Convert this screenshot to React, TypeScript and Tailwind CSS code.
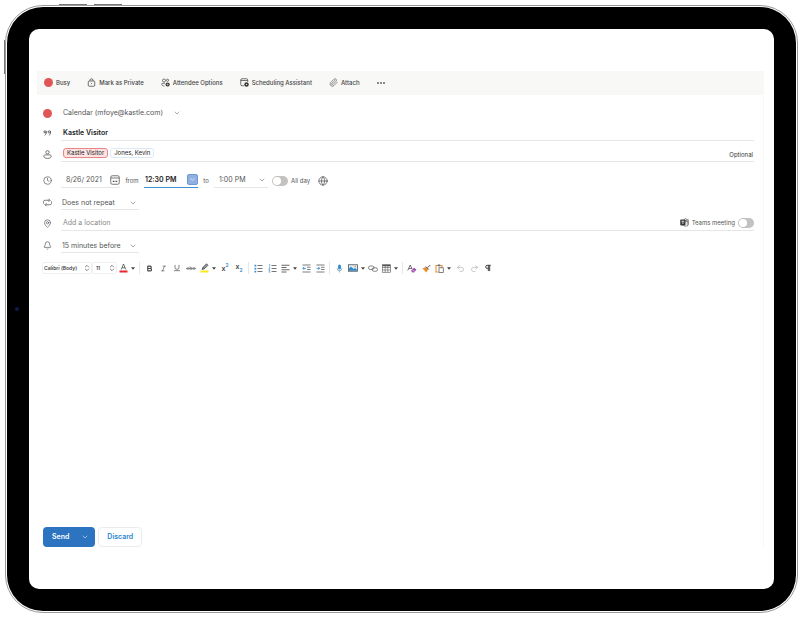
import type { ReactNode } from 'react'
import {
  Bell, Bold, ChevronDown, ChevronsUpDown, Clock, Globe,
  Italic, MapPin, Paperclip, Pilcrow, Redo2, Underline, Undo2,
} from 'lucide-react'
import { clsx } from 'clsx'

function Dot() {
  return <span className="w-[9px] h-[9px] rounded-full bg-[#e05656] shrink-0" />
}

function LockIcon() {
  return (
    <svg viewBox="0 0 18 18" className="w-[9px] h-[9px]" fill="none" stroke="currentColor" strokeWidth="1.5">
      <rect x="2.5" y="6" width="13" height="10.5" rx="2" />
      <path d="M6 6V4.500a3 3 0 0 1 6 0V6" />
      <circle cx="9" cy="11.2" r="1" fill="currentColor" stroke="none" />
    </svg>
  )
}

function AttendeesIcon() {
  return (
    <svg viewBox="0 0 18 18" className="w-[9px] h-[9px]" fill="none" stroke="currentColor" strokeWidth="1.4">
      <circle cx="6" cy="5" r="3" />
      <circle cx="13" cy="4.5" r="2.2" />
      <path d="M8 10.5H3a1.5 1.5 0 0 0-1.5 1.7c.3 2.5 2 3.8 5.5 3.8" />
      <circle cx="13.2" cy="13" r="4.2" fill="#333" stroke="none" />
      <path d="M13.2 10.8v4.4M11 13h4.4" stroke="#ddd" strokeWidth="1" />
    </svg>
  )
}

function SchedulingIcon() {
  return (
    <svg viewBox="0 0 18 18" className="w-[9px] h-[9px]" fill="none" stroke="currentColor" strokeWidth="1.5">
      <path d="M8 15.5H4A2.5 2.5 0 0 1 1.5 13V4A2.5 2.5 0 0 1 4 1.5h9A2.5 2.5 0 0 1 15.5 4v4M1.5 5h14" />
      <circle cx="13" cy="13" r="4.5" fill="#333" stroke="none" />
      <circle cx="13" cy="13" r="1.5" fill="#ddd" stroke="none" />
    </svg>
  )
}

function QuoteIcon() {
  return (
    <svg viewBox="0 0 18 18" className="w-[9px] h-[9px]" fill="none" stroke="currentColor" strokeWidth="1.6">
      <path d="M2 4h4.500v3.500H2ZM6.500 5c.3 4-.8 6.300-3.300 8M10.500 4H15v3.500h-4.500ZM15 5c.3 4-.8 6.300-3.300 8" />
    </svg>
  )
}

function PersonIcon() {
  return (
    <svg viewBox="0 0 18 18" className="w-[9px] h-[9px]" fill="none" stroke="currentColor" strokeWidth="1.6">
      <circle cx="9" cy="4.500" r="3.300" />
      <path d="M4.500 9.800h9c2 0 3.200 1 2.800 3-.5 2.600-3 4-7.300 4s-6.800-1.400-7.300-4c-.4-2 .8-3 2.800-3Z" />
    </svg>
  )
}

function RepeatIcon() {
  return (
    <svg viewBox="0 0 18 18" className="w-[9px] h-[9px]" fill="none" stroke="currentColor" strokeWidth="1.6">
      <path d="M2.500 12A4 4 0 0 1 5 4.500h8M11 1.500l3 3-3 3M15.500 6a4 4 0 0 1-2.500 7.500H5M7 10.500l-3 3 3 3" />
    </svg>
  )
}

function DateIcon() {
  return (
    <svg viewBox="0 0 20 20" className="w-[10px] h-[10px]" fill="none" stroke="currentColor" strokeWidth="1.6">
      <rect x="1.500" y="1.500" width="17" height="17" rx="3" />
      <path d="M1.500 6h17" />
      <path d="M5.500 12.500h3.500M11 12.500h3.500" strokeWidth="2.500" />
    </svg>
  )
}

function TeamsIcon() {
  return (
    <svg viewBox="0 0 18 18" className="w-[9px] h-[9px]">
      <g fill="none" stroke="#555" strokeWidth="1.3">
        <circle cx="11" cy="3.5" r="2.3" />
        <circle cx="15.5" cy="4.5" r="1.5" />
        <path d="M11 7h6v5.500c0 1.800-1.200 3-3 3M7 14.500c.8 1.500 2.200 2.300 3.800 2.300 2.300 0 3.700-1.600 3.700-3.800V7" />
      </g>
      <rect x="0.5" y="3" width="10.5" height="12" rx="1.5" fill="#3a3a3a" />
      <path d="M3 6.500h5.500M5.750 6.500v5.500" stroke="#fff" strokeWidth="1.5" />
    </svg>
  )
}

function ColorBarIcon({ kind }: { kind: 'font' | 'highlight' }) {
  return (
    <svg viewBox="0 0 18 20" className="w-[9px] h-[10px]" fill="none" stroke="#444" strokeWidth="1.5">
      {kind === 'font' ? (
        <path d="M4.500 13 9 2l4.500 11M6 9.500h6" />
      ) : (
        <path d="m4 13 2-4.500L13 1.500l3 3L9 11.500 4 13Zm2-4.500 3 3" fill="#999" />
      )}
      <rect x="1" y="15" width="16" height="4" stroke="none" fill={kind === 'font' ? '#e8262a' : '#f7ea1c'} />
    </svg>
  )
}

function StrikeIcon() {
  return (
    <span className="relative text-[5px] leading-[8px] text-[#777]">
      abc
      <span className="absolute -inset-x-px top-1 h-px bg-[#888]" />
    </span>
  )
}

function ScriptIcon({ sub }: { sub?: boolean }) {
  return (
    <span className={clsx('flex h-[10px] text-[7px] leading-[8px] font-semibold', sub ? 'items-start' : 'items-end')}>
      x
      <span className={clsx('text-[5px] leading-[5px] text-[#2f86c8]', sub ? 'self-end' : 'self-start')}>2</span>
    </span>
  )
}

function ListIcon({ numbered }: { numbered?: boolean }) {
  return (
    <svg viewBox="0 0 18 18" className="w-[9px] h-[9px]" fill="none">
      <path d="M7 3h10M7 9h10M7 15h10" stroke="#666" strokeWidth="1.8" />
      {numbered ? (
        <path d="M2 1h1.500v4.500M1.500 7.500H4L1.500 11H4M1.500 13H4l-1.500 1.700L4 16.500H1.500" stroke="#3a8fd0" strokeWidth="1.3" />
      ) : (
        <path d="M1 3h3.500M1 9h3.500M1 15h3.500" stroke="#3a8fd0" strokeWidth="3.5" />
      )}
    </svg>
  )
}

function AlignIcon() {
  return (
    <svg viewBox="0 0 18 18" className="w-[9px] h-[9px]" fill="none" stroke="#555" strokeWidth="1.8">
      <path d="M1 2.500h16M1 7h10M1 11.500h16M1 16h10" />
    </svg>
  )
}

function IndentIcon({ outdent }: { outdent?: boolean }) {
  return (
    <svg viewBox="0 0 18 18" className="w-[9px] h-[9px]" fill="none" stroke="#666" strokeWidth="1.7">
      <path d="M1 2h16M10 6.500h7M10 11h7M1 16h16" />
      <path d={outdent ? 'M8 8.700H1.500M4.500 5.700l-3 3 3 3' : 'M1 8.700h6.500M4.500 5.700l3 3-3 3'} stroke="#3a8fd0" strokeWidth="1.8" />
    </svg>
  )
}

function MicIcon() {
  return (
    <svg viewBox="0 0 18 18" className="w-[9px] h-[9px]" fill="none" stroke="#6b8fae" strokeWidth="1.4">
      <rect x="6" y="1" width="6" height="10" rx="3" fill="#3a8fd0" stroke="none" />
      <path d="M4 8.500a5 5 0 0 0 10 0M9 13.500V17" />
    </svg>
  )
}

function PictureIcon() {
  return (
    <svg viewBox="0 0 20 16" className="w-[10px] h-[8px]" fill="none">
      <rect x="1" y="1.500" width="18" height="13" fill="#d7eaf8" stroke="#555" strokeWidth="1.6" />
      <path d="M2 13.500V9l4-3.500 5 4.500 3-2 4 3.500v2H2Z" fill="#2f86c8" />
      <circle cx="14.500" cy="5" r="1.5" fill="#e8963a" />
    </svg>
  )
}

function LinkIcon() {
  return (
    <svg viewBox="0 0 20 18" className="w-[10px] h-[9px]" fill="none" stroke="#666" strokeWidth="1.6">
      <rect x="1" y="4" width="11" height="7" rx="3.5" />
      <rect x="8" y="7.500" width="11" height="7" rx="3.5" />
    </svg>
  )
}

function TableIcon() {
  return (
    <svg viewBox="0 0 18 18" className="w-[9px] h-[9px]" fill="none" stroke="#555" strokeWidth="1.2">
      <rect x="1" y="1.500" width="16" height="15" />
      <path d="M1 7h16M1 12h16M6.300 4v12.500M11.600 4v12.500" />
      <path d="M1 3h16" strokeWidth="3" />
    </svg>
  )
}

function ClearFormatIcon() {
  return (
    <svg viewBox="0 0 20 18" className="w-[10px] h-[9px]" fill="none">
      <path d="M1.500 13 6.500 2l4 9M3.500 9h6" stroke="#444" strokeWidth="1.5" />
      <path d="m8 13.500 6-6 5 3.500-5 6h-3Z" fill="#a74bb5" />
      <path d="m10.500 11.500 4.500 3.500" stroke="#fff" />
    </svg>
  )
}

function BrushIcon() {
  return (
    <svg viewBox="0 0 18 18" className="w-[9px] h-[9px]" fill="none">
      <path d="M1 9 7.500 6l5 5-4 6Z" fill="#ee8d2e" />
      <path d="m7.500 5 6 6M11 7.500 16.500 2" stroke="#555" strokeWidth="2" />
    </svg>
  )
}

function PasteIcon() {
  return (
    <svg viewBox="0 0 18 18" className="w-[9px] h-[9px]" fill="none">
      <path d="M7 16H2V3h12v4" stroke="#e8923a" strokeWidth="2.2" />
      <path d="M5.500 1h5v3.500h-5Z" fill="#666" />
      <rect x="8" y="7.500" width="8.500" height="9.500" fill="#fff" stroke="#555" strokeWidth="1.5" />
    </svg>
  )
}

function Caret() {
  return (
    <svg viewBox="0 0 8 5" className="w-1 h-[3px] shrink-0">
      <path d="M0 0h8L4 5Z" fill="#444" />
    </svg>
  )
}

type Tool = { label: string; icon: ReactNode; menu?: boolean }

const toolGroups: Tool[][] = [
  [{ label: 'Font color', icon: <ColorBarIcon kind="font" />, menu: true }],
  [
    { label: 'Bold', icon: <Bold size={7} strokeWidth={4} /> },
    { label: 'Italic', icon: <Italic size={7} /> },
    { label: 'Underline', icon: <Underline size={8} /> },
    { label: 'Strikethrough', icon: <StrikeIcon /> },
    { label: 'Highlight', icon: <ColorBarIcon kind="highlight" />, menu: true },
    { label: 'Superscript', icon: <ScriptIcon /> },
    { label: 'Subscript', icon: <ScriptIcon sub /> },
  ],
  [
    { label: 'Bullets', icon: <ListIcon /> },
    { label: 'Numbering', icon: <ListIcon numbered /> },
    { label: 'Align', icon: <AlignIcon />, menu: true },
    { label: 'Decrease indent', icon: <IndentIcon outdent /> },
    { label: 'Increase indent', icon: <IndentIcon /> },
  ],
  [
    { label: 'Dictate', icon: <MicIcon /> },
    { label: 'Picture', icon: <PictureIcon />, menu: true },
    { label: 'Link', icon: <LinkIcon /> },
    { label: 'Table', icon: <TableIcon />, menu: true },
  ],
  [
    { label: 'Clear formatting', icon: <ClearFormatIcon /> },
    { label: 'Format painter', icon: <BrushIcon /> },
    { label: 'Paste', icon: <PasteIcon />, menu: true },
    { label: 'Undo', icon: <Undo2 size={9} className="text-[#b5b5b5]" /> },
    { label: 'Redo', icon: <Redo2 size={9} className="text-[#b5b5b5]" /> },
    { label: 'Paragraph marks', icon: <Pilcrow size={8} strokeWidth={3} /> },
  ],
]

const actions = [
  { label: 'Busy', icon: <Dot /> },
  { label: 'Mark as Private', icon: <LockIcon /> },
  { label: 'Attendee Options', icon: <AttendeesIcon /> },
  { label: 'Scheduling Assistant', icon: <SchedulingIcon /> },
  { label: 'Attach', icon: <Paperclip size={9} strokeWidth={1.5} /> },
]

function Row({ icon, className, children }: { icon: ReactNode; className?: string; children: ReactNode }) {
  return (
    <div className={clsx('flex items-end pr-[9px]', className)}>
      <span className="flex items-center w-6 h-4 pl-[6px] pt-px shrink-0 text-[#555]">{icon}</span>
      {children}
    </div>
  )
}

function Dropdown({ label, value, className }: { label: string; value: string; className?: string }) {
  return (
    <div className={clsx('flex items-center relative h-4 border-b', className)}>
      <select aria-label={label} className="appearance-none w-full outline-none">
        <option>{value}</option>
      </select>
      <ChevronDown size={8} strokeWidth={1.5} className="absolute right-0.5 pointer-events-none" />
    </div>
  )
}

function Toggle({ id }: { id: string }) {
  return (
    <input
      id={id}
      type="checkbox"
      role="switch"
      className="appearance-none flex items-center w-4 h-[10px] p-px rounded-full bg-[#c4c2c0] checked:bg-[#2c74bf] checked:justify-end before:w-[8px] before:h-[8px] before:rounded-full before:bg-white"
    />
  )
}

function FormatBar() {
  return (
    <div className="flex items-center h-[14px] mt-2 pl-[5px] text-[#444]">
      <div className="relative flex items-center w-[50px] h-3 border border-[#f0f0f0] rounded-xs">
        <select aria-label="Font" className="appearance-none w-full pl-px text-[5px] font-semibold outline-none">
          <option>Calibri (Body)</option>
        </select>
        <ChevronsUpDown size={8} className="absolute right-0 pointer-events-none" />
      </div>
      <div className="relative flex items-center w-[25px] h-3 border border-[#f0f0f0] rounded-xs">
        <select aria-label="Font size" className="appearance-none w-full pl-[3px] text-[5px] font-semibold outline-none">
          <option>11</option>
        </select>
        <ChevronsUpDown size={8} className="absolute right-0 pointer-events-none" />
      </div>
      {toolGroups.map((group, i) => (
        <div key={i} className="flex items-center">
          {i > 0 && <span className="w-px h-3 mx-0.5 bg-[#e6e6e6]" />}
          {group.map(({ label, icon, menu }) => (
            <button key={label} type="button" aria-label={label} className={clsx('flex items-center justify-center h-3', menu ? 'w-5 gap-[3px]' : 'w-[14px]')}>
              {icon}
              {menu && <Caret />}
            </button>
          ))}
        </div>
      ))}
    </div>
  )
}

function EventForm() {
  return (
    <form className="flex flex-col flex-1 border-r border-[#f8f8f8] text-[7px] leading-[10px] text-[#555]">
      {/* Top actions */}
      <div className="flex items-center gap-[17px] h-6 pl-[7px] pb-px bg-[#f8f8f7] text-[6px] font-medium text-[#444]">
        {actions.map(({ label, icon }) => (
          <button key={label} type="button" className="flex items-center gap-[3px]">
            {icon}
            {label}
          </button>
        ))}
        <button type="button" aria-label="More" className="flex gap-px">
          <span className="w-[2px] h-[2px] rounded-full bg-[#666]" />
          <span className="w-[2px] h-[2px] rounded-full bg-[#666]" />
          <span className="w-[2px] h-[2px] rounded-full bg-[#666]" />
        </button>
      </div>

      {/* Event fields */}
      <Row icon={<Dot />} className="h-[26px]">
        <Dropdown label="Calendar" value="Calendar (mfoye@kastle.com)" className="w-[122px] pl-0.5 border-transparent" />
      </Row>
      <Row icon={<QuoteIcon />} className="h-5">
        <input aria-label="Title" defaultValue="Kastle Visitor" className="flex-1 h-4 pl-0.5 border-b border-[#e6e6e6] font-semibold text-[#222] outline-none" />
      </Row>
      <Row icon={<PersonIcon />} className="h-[21px]">
        <div className="flex items-center flex-1 gap-0.5 h-4 pl-0.5 pb-px border-b border-[#e6e6e6] text-[6px] leading-[8px] text-[#222]">
          <span className="px-[3px] border border-[#ea8585] rounded-[3px] bg-[#fde4e4]">Kastle Visitor</span>
          <span className="px-[3px] border border-[#dbe9f7] rounded-[3px]">Jones, Kevin</span>
          <button type="button" className="ml-auto pr-px pt-1 text-[#333]">Optional</button>
        </div>
      </Row>
      <Row icon={<Clock size={9} strokeWidth={1.8} />} className="h-[26px]">
        <div className="flex items-center w-[59px] h-4 pl-[5px] border-b border-[#e6e6e6]">
          <input aria-label="Start date" defaultValue="8/26/ 2021" className="flex-1 min-w-0 outline-none" />
          <button type="button" aria-label="Pick a date"><DateIcon /></button>
        </div>
        <label htmlFor="start" className="w-6 h-4 pt-1 text-center text-[6px]">from</label>
        <div className="flex items-center w-[54px] h-4 pl-px border-b border-[#3f8fd6]">
          <input id="start" defaultValue="12:30 PM" className="flex-1 min-w-0 font-semibold text-[#222] outline-none" />
          <button type="button" aria-label="Pick a start time" className="flex items-center justify-center w-[11px] h-[11px] rounded-xs border border-[#6f97d2] bg-[#8fb1e2] text-white">
            <ChevronDown size={7} />
          </button>
        </div>
        <span className="w-4 h-4 pt-1 text-center text-[6px]">to</span>
        <Dropdown label="End time" value="1:00 PM" className="w-[54px] pl-[5px] border-[#e6e6e6]" />
        <div className="flex items-center gap-[3px] h-4 pl-1 pt-px text-[6px]">
          <Toggle id="all-day" />
          <label htmlFor="all-day">All day</label>
          <button type="button" aria-label="Time zone" className="pl-[5px]">
            <Globe size={10} strokeWidth={1.8} />
          </button>
        </div>
      </Row>
      <Row icon={<RepeatIcon />} className="h-[22px]">
        <Dropdown label="Repeat" value="Does not repeat" className="w-[78px] pl-px pt-0.5 border-[#e6e6e6]" />
      </Row>
      <Row icon={<MapPin size={9} strokeWidth={1.8} />} className="h-[21px]">
        <div className="flex items-center flex-1 gap-[3px] h-4 pl-0.5 border-b border-[#e6e6e6] text-[6px]">
          <input aria-label="Location" placeholder="Add a location" className="flex-1 text-[7px] placeholder:text-[#888] outline-none" />
          <TeamsIcon />
          <label htmlFor="teams">Teams meeting</label>
          <Toggle id="teams" />
        </div>
      </Row>
      <Row icon={<Bell size={9} strokeWidth={1.8} />} className="h-[22px]">
        <Dropdown label="Reminder" value="15 minutes before" className="w-[78px] pl-px pt-0.5 border-[#e6e6e6]" />
      </Row>

      <FormatBar />
      <textarea aria-label="Description" className="flex-1 min-h-60 resize-none outline-none" />

      <div className="flex gap-[3px] pl-[6px] pb-0.5 font-semibold">
        <button type="submit" className="flex items-center gap-3 h-5 pl-[9px] pr-[6px] rounded bg-[#2c74bf] text-white">
          Send
          <ChevronDown size={8} strokeWidth={1.5} />
        </button>
        <button type="button" className="h-5 px-2 border border-[#ebebeb] rounded text-[#2a86d0]">Discard</button>
      </div>
    </form>
  )
}

export default function App() {
  return (
    <div className="flex min-h-screen pt-[5px] pr-0.5 pb-[9px] pl-[5px] bg-white font-['Inter',sans-serif]">
      {/* Tablet frame */}
      <div className="relative flex flex-1 p-px border border-[#999] rounded-[38px]">
        <span className="absolute -left-0.5 top-[34px] w-px h-[34px] bg-[#777]" />
        <span className="absolute left-[53px] -top-0.5 w-7 h-px bg-[#777]" />
        <span className="absolute left-[88px] -top-0.5 w-7 h-px bg-[#777]" />
        <div className="relative flex flex-1 p-[22px] rounded-[36px] bg-black">
          <span className="absolute left-2 top-1/2 w-1 h-1 -translate-y-1/2 rounded-full bg-[#0c1a4a]" />
          <main className="flex flex-1 pt-[42px] pr-[10px] pb-10 pl-2 rounded-[10px] bg-white">
            <EventForm />
          </main>
        </div>
      </div>
    </div>
  )
}
